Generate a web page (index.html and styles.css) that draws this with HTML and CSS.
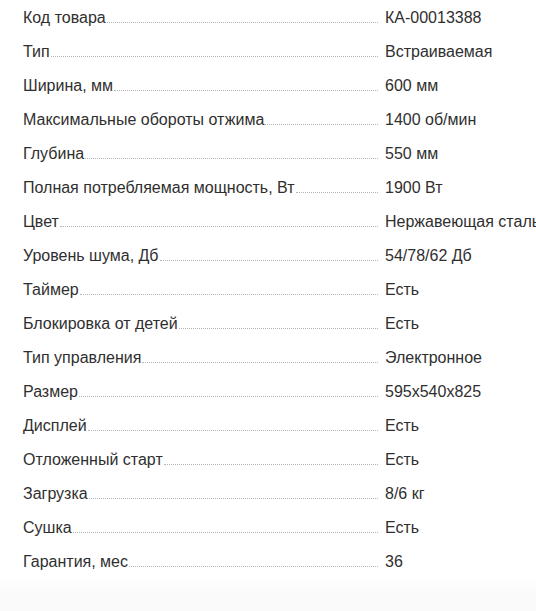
FILE: index.html
```
<!DOCTYPE html>
<html lang="ru">
<head>
<meta charset="utf-8">
<link rel="stylesheet" href="styles.css">
</head>
<body>
<div class="specs">
  <div class="row"><div class="name"><span>Код товара</span><i class="dots"></i></div><div class="val">КА-00013388</div></div>
  <div class="row"><div class="name"><span>Тип</span><i class="dots"></i></div><div class="val">Встраиваемая</div></div>
  <div class="row"><div class="name"><span>Ширина, мм</span><i class="dots"></i></div><div class="val">600 мм</div></div>
  <div class="row"><div class="name"><span>Максимальные обороты отжима</span><i class="dots"></i></div><div class="val">1400 об/мин</div></div>
  <div class="row"><div class="name"><span>Глубина</span><i class="dots"></i></div><div class="val">550 мм</div></div>
  <div class="row"><div class="name"><span>Полная потребляемая мощность, Вт</span><i class="dots"></i></div><div class="val">1900 Вт</div></div>
  <div class="row"><div class="name"><span>Цвет</span><i class="dots"></i></div><div class="val">Нержавеющая сталь</div></div>
  <div class="row"><div class="name"><span>Уровень шума, Дб</span><i class="dots"></i></div><div class="val">54/78/62 Дб</div></div>
  <div class="row"><div class="name"><span>Таймер</span><i class="dots"></i></div><div class="val">Есть</div></div>
  <div class="row"><div class="name"><span>Блокировка от детей</span><i class="dots"></i></div><div class="val">Есть</div></div>
  <div class="row"><div class="name"><span>Тип управления</span><i class="dots"></i></div><div class="val">Электронное</div></div>
  <div class="row"><div class="name"><span>Размер</span><i class="dots"></i></div><div class="val">595x540x825</div></div>
  <div class="row"><div class="name"><span>Дисплей</span><i class="dots"></i></div><div class="val">Есть</div></div>
  <div class="row"><div class="name"><span>Отложенный старт</span><i class="dots"></i></div><div class="val">Есть</div></div>
  <div class="row"><div class="name"><span>Загрузка</span><i class="dots"></i></div><div class="val">8/6 кг</div></div>
  <div class="row"><div class="name"><span>Сушка</span><i class="dots"></i></div><div class="val">Есть</div></div>
  <div class="row"><div class="name"><span>Гарантия, мес</span><i class="dots"></i></div><div class="val">36</div></div>
</div>
<div class="bottom"></div>
</body>
</html>
```
FILE: styles.css
```
html, body {
  margin: 0;
  padding: 0;
  background: #ffffff;
  overflow: hidden;
}
body {
  font-family: "Liberation Sans", Arial, sans-serif;
  font-size: 16px;
  color: #2f2f2f;
  width: 536px;
  height: 611px;
  display: flex;
  flex-direction: column;
}
.specs {
  padding-left: 23px;
  padding-top: 1px;
  flex: none;
}
.row {
  display: flex;
  align-items: baseline;
  height: 34px;
  line-height: 34px;
  white-space: nowrap;
}
.name {
  display: flex;
  align-items: baseline;
  width: 355px;
  flex: none;
}
.dots {
  flex: 1;
  height: 0;
  border-bottom: 1px dotted #b5b5b5;
  margin-left: 1px;
}
.val {
  margin-left: 7px;
  flex: none;
}
.bottom {
  flex: 1;
  background: linear-gradient(#ffffff, #fbfafa 40%, #fbfafa);
}
```
